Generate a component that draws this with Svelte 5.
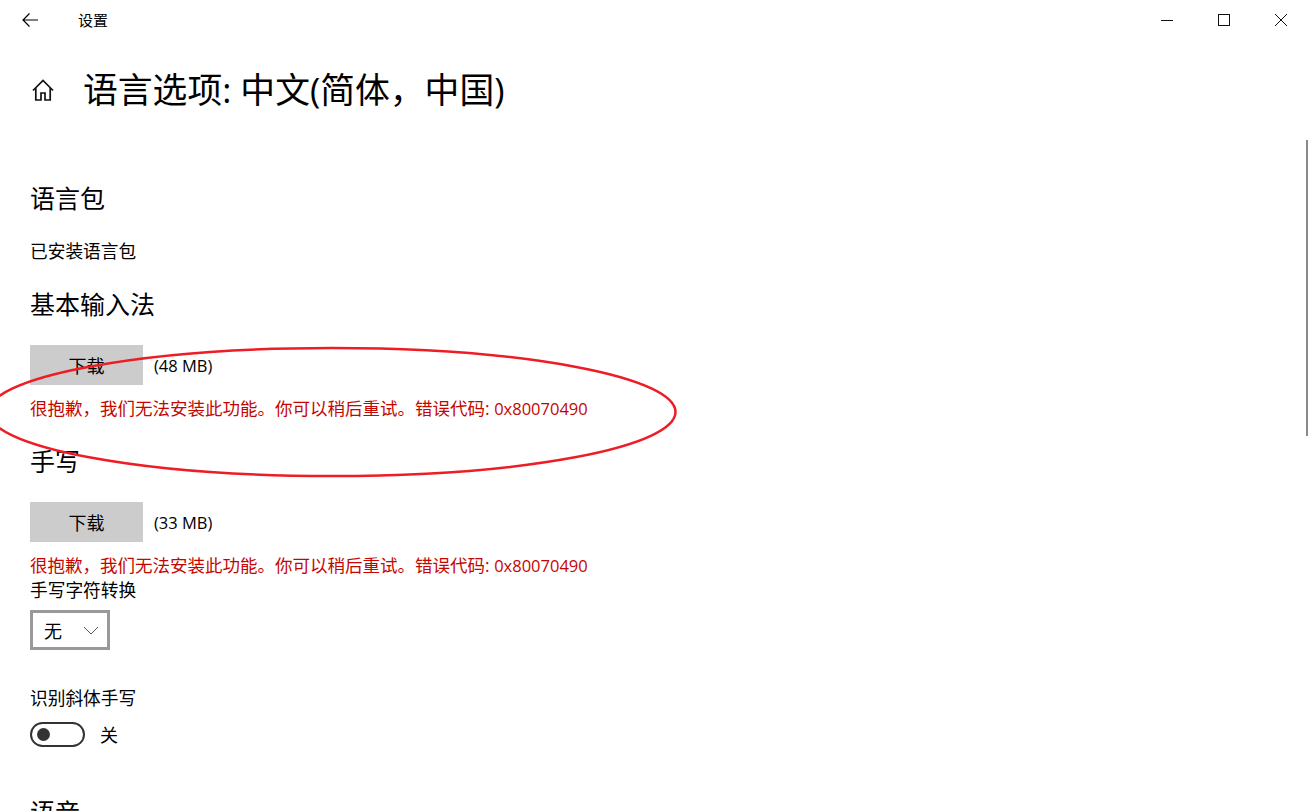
<script>
  const errorText = "很抱歉，我们无法安装此功能。你可以稍后重试。错误代码: ";
  const errorCode = "0x80070490";
</script>

<div class="window">
  <header class="titlebar">
    <button class="back" aria-label="返回">
      <svg width="16" height="14" viewBox="0 0 16 14"><path d="M7.5 0.5 L1 7 L7.5 13.5 M1 7 H16" fill="none" stroke="#000" stroke-width="1.2" /></svg>
    </button>
    <span class="app-name">设置</span>
    <div class="controls">
      <svg class="ctl" width="12" height="12" viewBox="0 0 12 12"><path d="M0 6.5 H12" stroke="#111" stroke-width="1" /></svg>
      <svg class="ctl" width="12" height="12" viewBox="0 0 12 12"><rect x="0.5" y="0.5" width="11" height="11" fill="none" stroke="#111" stroke-width="1" /></svg>
      <svg class="ctl" width="12" height="12" viewBox="0 0 12 12"><path d="M0 0 L12 12 M12 0 L0 12" stroke="#111" stroke-width="1" /></svg>
    </div>
  </header>

  <div class="page-head">
    <svg class="home" width="24" height="24" viewBox="0 0 24 24">
      <path d="M2 12.5 L12 2.5 L22 12.5 M4.8 10 V22 H10 V15 H14 V22 H19.2 V10" fill="none" stroke="#111" stroke-width="1.7" />
    </svg>
    <h1>语言选项: 中文(简体，中国)</h1>
  </div>

  <main class="content">
    <h2 class="first">语言包</h2>
    <p class="installed">已安装语言包</p>

    <h2 class="ime">基本输入法</h2>
    <div class="download">
      <button class="btn">下载</button>
      <span>(48 MB)</span>
    </div>
    <p class="error">{errorText}<span class="code">{errorCode}</span></p>

    <h2 class="hand">手写</h2>
    <div class="download">
      <button class="btn">下载</button>
      <span>(33 MB)</span>
    </div>
    <p class="error">{errorText}<span class="code">{errorCode}</span></p>

    <p class="label convert">手写字符转换</p>
    <div class="select">
      <span>无</span>
      <svg width="16" height="9" viewBox="0 0 16 9"><path d="M1 1 L8 8 L15 1" fill="none" stroke="#555" stroke-width="1" /></svg>
    </div>

    <p class="label italic">识别斜体手写</p>
    <div class="toggle-row">
      <span class="toggle"><span class="knob"></span></span>
      <span>关</span>
    </div>

    <h2 class="speech">语音</h2>
  </main>

  <div class="scroll-thumb"></div>

  <svg class="mark" width="1310" height="811" viewBox="0 0 1310 811">
    <ellipse cx="332" cy="412" rx="343.5" ry="64" fill="none" stroke="#ee1c25" stroke-width="2.5" />
  </svg>
</div>

<style>
  :global(body) {
    margin: 0;
    background: #fff;
  }

  .window {
    position: relative;
    width: 1310px;
    height: 811px;
    overflow: hidden;
    background: #fff;
    color: #000;
    font-family: "Open Sans", "Noto Sans CJK SC", sans-serif;
    font-size: 17.7px;
  }

  .titlebar {
    display: flex;
    align-items: center;
    height: 40px;
    padding-left: 22px;
  }

  .back {
    display: flex;
    width: 56px;
    padding: 0;
    border: none;
    background: none;
  }

  .app-name {
    font-size: 15px;
    line-height: 20px;
  }

  .controls {
    display: flex;
    gap: 45px;
    margin-left: auto;
    padding-right: 23px;
  }

  .page-head {
    display: flex;
    align-items: center;
    height: 60px;
    margin-top: 20px;
    padding-left: 31px;
  }

  .home {
    margin-right: 28px;
  }

  h1 {
    margin: 0;
    font-size: 34.8px;
    line-height: 60px;
    font-weight: 400;
  }

  .content {
    padding-left: 30px;
  }

  h2 {
    margin: 0;
    font-size: 25px;
    line-height: 34px;
    font-weight: 400;
  }

  p {
    margin: 0;
    line-height: 24px;
  }

  .first {
    margin-top: 61px;
  }

  .installed {
    margin-top: 24px;
  }

  .ime {
    margin-top: 24px;
  }

  .download {
    display: flex;
    align-items: center;
    gap: 11px;
    margin-top: 24px;
    font-size: 16.5px;
  }

  .btn {
    width: 113px;
    height: 40px;
    padding: 0;
    border: none;
    background: #cccccc;
    color: #000;
    font: inherit;
    font-size: 18px;
  }

  .error {
    margin-top: 11px;
    color: #c50500;
    font-size: 17.5px;
  }

  .code {
    font-size: 16.5px;
  }

  .hand {
    margin-top: 23px;
  }

  .convert {
    margin-top: 0;
  }

  .select {
    display: flex;
    align-items: center;
    box-sizing: border-box;
    width: 80px;
    height: 40px;
    margin-top: 8px;
    padding-left: 11px;
    border: 3px solid #999;
    gap: 21px;
    font-size: 18px;
  }

  .italic {
    margin-top: 36px;
  }

  .toggle-row {
    display: flex;
    align-items: center;
    gap: 15px;
    height: 26px;
    margin-top: 11px;
    font-size: 18px;
  }

  .toggle {
    display: flex;
    align-items: center;
    box-sizing: border-box;
    width: 55px;
    height: 25px;
    padding-left: 5px;
    border: 2px solid #333;
    border-radius: 13px;
  }

  .knob {
    width: 13px;
    height: 13px;
    border-radius: 50%;
    background: #333;
  }

  .speech {
    margin-top: 48px;
  }

  .scroll-thumb {
    position: absolute;
    top: 140px;
    right: 2px;
    width: 2px;
    height: 296px;
    background: #8a8a8a;
  }

  .mark {
    position: absolute;
    inset: 0;
    pointer-events: none;
  }
</style>
